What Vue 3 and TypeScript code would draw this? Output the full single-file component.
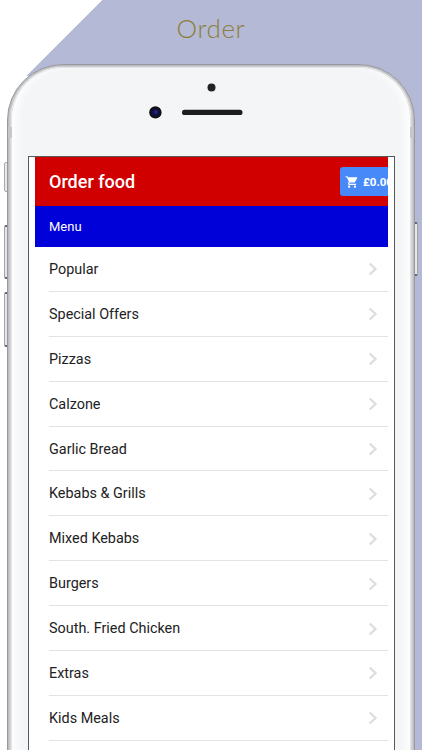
<script setup lang="ts">
const categories: string[] = [
  'Popular',
  'Special Offers',
  'Pizzas',
  'Calzone',
  'Garlic Bread',
  'Kebabs & Grills',
  'Mixed Kebabs',
  'Burgers',
  'South. Fried Chicken',
  'Extras',
  'Kids Meals',
]
</script>

<template>
  <main class="page">
    <h1 class="caption">Order</h1>
    <div class="device">
      <span class="key mute"></span>
      <span class="key volume-up"></span>
      <span class="key volume-down"></span>
      <span class="key power"></span>
      <div class="shell">
        <span class="band left"></span>
        <span class="band right"></span>
        <div class="face">
          <svg class="sensors" width="100" height="40" viewBox="0 0 100 40" aria-hidden="true">
            <circle cx="62.5" cy="7.5" r="4" fill="#222224" />
            <circle cx="6.4" cy="32.4" r="6.2" fill="#101014" />
            <circle cx="6.4" cy="32.4" r="3.7" fill="#10104e" />
            <circle cx="6.8" cy="32" r="1.7" fill="#252577" />
            <rect x="33" y="29.8" width="60.5" height="5.2" rx="2.6" fill="#1d1d1f" />
          </svg>
          <div class="screen">
            <div class="app">
              <header class="bar">
                <h2>Order food</h2>
                <button class="basket" type="button">
                  <svg width="14" height="14" viewBox="0 0 24 24" fill="#fff" aria-hidden="true">
                    <path d="M7 18c-1.100 0-1.990.9-1.990 2S5.900 22 7 22s2-.9 2-2-.9-2-2-2zM1 2v2h2l3.600 7.590-1.350 2.450c-.16.28-.25.610-.25.960 0 1.100.9 2 2 2h12v-2H7.420c-.14 0-.25-.11-.25-.25l.03-.12.9-1.630h7.450c.750 0 1.410-.41 1.750-1.030l3.580-6.490A1 1 0 0 0 20 4H5.210l-.94-2H1zm16 16c-1.100 0-1.990.9-1.990 2s.89 2 1.990 2 2-.9 2-2-.9-2-2-2z" />
                  </svg>
                  <span>£0.00</span>
                </button>
              </header>
              <div class="section">Menu</div>
              <ul class="list">
                <li v-for="name in categories" :key="name">
                  <span>{{ name }}</span>
                  <svg width="10" height="14" viewBox="0 0 10 14" fill="none" aria-hidden="true">
                    <path d="M1.700 1.500 7.500 7 1.700 12.500" stroke="#dddddd" stroke-width="2.300" />
                  </svg>
                </li>
              </ul>
            </div>
          </div>
        </div>
      </div>
    </div>
  </main>
</template>

<style>
body {
  background: #fff;
}
</style>

<style scoped>
.page {
  box-sizing: border-box;
  width: 422px;
  height: 750px;
  overflow: hidden;
  background: linear-gradient(135deg, #fff 72px, #b4b9d5 72.800px);
}
.caption {
  margin: 0;
  height: 64px;
  box-sizing: border-box;
  padding-top: 11px;
  font: 300 26px/34px Lato, sans-serif;
  letter-spacing: 0.600px;
  text-align: center;
  color: #8d7d3c;
}
.device {
  position: relative;
  height: 686px;
  padding: 0 7px;
  background: linear-gradient(90deg, #fff 30px, transparent 30px) 0 12px no-repeat;
}
.shell {
  position: relative;
  box-sizing: border-box;
  width: 408px;
  height: 760px;
  padding: 2px 3px 0;
  border: 1px solid #98999f;
  border-radius: 56px;
  background: #dcdddf;
  box-shadow: inset 0 0 3px 1px #aaabaf;
}
.face {
  box-sizing: border-box;
  height: 760px;
  padding: 13px 0 0 17px;
  border-radius: 52px;
  background: #f3f5f7;
  box-shadow: inset 0 0 0 1px #e3e4e6, inset 8px 0 8px -3px #fff, inset -8px 0 8px -3px #fff;
}
.sensors {
  display: block;
  margin-left: 121px;
}
.band {
  position: absolute;
  top: 62px;
  width: 4px;
  height: 11px;
  background: #c5c6c8;
}
.band.left {
  left: 0;
}
.band.right {
  right: 0;
}
.key {
  position: absolute;
  box-sizing: border-box;
  left: 4px;
  width: 5px;
  border: 1px solid #a4a4a7;
  border-top: 2px solid #66666a;
  border-bottom: 2px solid #66666a;
  border-radius: 2px;
  background: #e7e7e9;
}
.mute {
  top: 98px;
  height: 30px;
  border: 1px solid #aaa;
}
.volume-up {
  top: 161px;
  height: 54px;
}
.volume-down {
  top: 228px;
  height: 55px;
}
.power {
  left: 413px;
  top: 158px;
  height: 54px;
}
.screen {
  box-sizing: border-box;
  width: 367px;
  height: 640px;
  margin-top: 36px;
  padding: 0 6px;
  border: 1px solid #58595b;
  background: #fff;
}
.app {
  overflow: hidden;
  width: 353px;
  font-family: Roboto, sans-serif;
}
.bar {
  display: flex;
  align-items: center;
  justify-content: space-between;
  height: 49px;
  padding-left: 14px;
  background: #d00000;
  color: #fff;
}
.bar h2 {
  margin: 0;
  font-size: 18px;
  font-weight: 500;
  white-space: nowrap;
}
.basket {
  display: flex;
  flex: none;
  align-items: center;
  gap: 4px;
  box-sizing: border-box;
  width: 62px;
  height: 29px;
  margin-right: -14px;
  padding: 0 0 0 5px;
  border: 0;
  border-radius: 3px;
  background: #4889fa;
  color: #fff;
  font: 700 11.500px Roboto, sans-serif;
}
.section {
  height: 40.500px;
  padding-left: 14px;
  background: #0000d8;
  color: #fff;
  font-size: 13px;
  line-height: 41px;
}
.list {
  margin: 0;
  padding: 0.500px 0 0 14px;
  list-style: none;
}
.list li {
  display: flex;
  align-items: center;
  justify-content: space-between;
  box-sizing: border-box;
  height: 44.900px;
  padding-top: 1px;
  padding-right: 10px;
  border-bottom: 1.500px solid #e3e3e4;
  color: #222;
  font-size: 14.400px;
}
</style>
